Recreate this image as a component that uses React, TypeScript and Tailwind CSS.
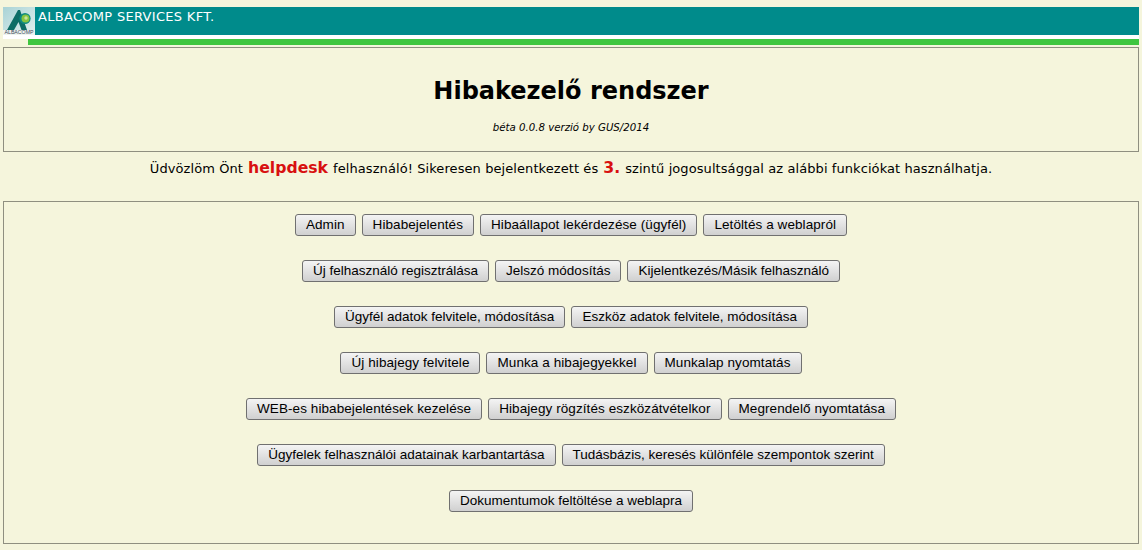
const rows = [
  ["Admin", "Hibabejelentés", "Hibaállapot lekérdezése (ügyfél)", "Letöltés a weblapról"],
  ["Új felhasználó regisztrálása", "Jelszó módosítás", "Kijelentkezés/Másik felhasználó"],
  ["Ügyfél adatok felvitele, módosítása", "Eszköz adatok felvitele, módosítása"],
  ["Új hibajegy felvitele", "Munka a hibajegyekkel", "Munkalap nyomtatás"],
  ["WEB-es hibabejelentések kezelése", "Hibajegy rögzítés eszközátvételkor", "Megrendelő nyomtatása"],
  ["Ügyfelek felhasználói adatainak karbantartása", "Tudásbázis, keresés különféle szempontok szerint"],
  ["Dokumentumok feltöltése a weblapra"],
];

function Logo() {
  return (
    <svg width="32" height="28" viewBox="0 0 32 28" className="shrink-0">
      <defs>
        <linearGradient id="logoBg" x1="0" y1="0" x2="1" y2="1">
          <stop offset="0" stopColor="#a9d3d6" />
          <stop offset="1" stopColor="#e3f0ee" />
        </linearGradient>
      </defs>
      <rect width="32" height="28" fill="url(#logoBg)" />
      <path d="M4 23 L15 3 L17 3 L24 23 L18.5 23 L15.5 15 L11 23 Z" fill="#0d6d66" />
      <circle cx="22" cy="11.5" r="5.6" fill="#0d8a80" />
      <circle cx="22.5" cy="11.5" r="4" fill="#86c440" />
      <circle cx="23" cy="11" r="1.7" fill="#c8e39a" />
      <rect y="23" width="32" height="5" fill="#eef3ee" />
      <text x="16" y="27" textAnchor="middle" fontSize="4.6" fontFamily="Liberation Sans, sans-serif" fill="#3a4a60" textLength="29" lengthAdjust="spacingAndGlyphs">ALBACOMP</text>
    </svg>
  );
}

export default function App() {
  return (
    <div className="w-[1142px] h-[550px] overflow-hidden bg-[#f5f5dc] pt-[7px] px-[3px] font-['DejaVu_Sans',sans-serif] text-black">
      <div className="h-[28px] bg-[#008b8b] flex items-start">
        <Logo />
        <span className="ml-[3px] text-[13px] leading-[20px] text-white tracking-[0.3px]">ALBACOMP SERVICES KFT.</span>
      </div>
      <div className="h-[4px] bg-white" />
      <div className="h-[6px] bg-[#3fc63f] ml-[25px]" />
      <div className="mt-[2px] h-[105px] border border-[#8f8f80] flex flex-col items-center">
        <h1 className="mt-[26px] text-[24px] leading-[34px] font-bold">Hibakezelő rendszer</h1>
        <p className="mt-[14px] text-[10.2px] leading-[12px] italic">béta 0.0.8 verzió by GUS/2014</p>
      </div>
      <p className="mt-[4px] h-[24px] flex items-baseline justify-center gap-[5px] text-[13px] leading-[24px] tracking-[0.08px] whitespace-pre">
        <span>Üdvözlöm Önt</span>
        <b className="text-[15.7px] text-[#d81010] tracking-normal">helpdesk</b>
        <span>felhasználó! Sikeresen bejelentkezett és</span>
        <b className="text-[15.7px] text-[#d81010] tracking-normal">3.</b>
        <span>szintű jogosultsággal az alábbi funkciókat használhatja.</span>
      </p>
      <div className="mt-[21px] h-[343px] border border-[#8f8f80] pt-[12px] flex flex-col gap-[24px]">
        {rows.map((row, i) => (
          <div key={i} className={i === 0 || i === 3 || i === 4 ? "flex justify-center gap-[6px] tracking-[0.08px]" : "flex justify-center gap-[6px]"}>
            {row.map((label) => (
              <button
                key={label}
                className="h-[22px] px-[10px] rounded-[3px] border border-[#707070] bg-gradient-to-b from-[#f4f4f4] to-[#d0d0d0] font-['Liberation_Sans',sans-serif] text-[13.5px] leading-[20px] text-black whitespace-nowrap"
              >
                {label}
              </button>
            ))}
          </div>
        ))}
      </div>
    </div>
  );
}
